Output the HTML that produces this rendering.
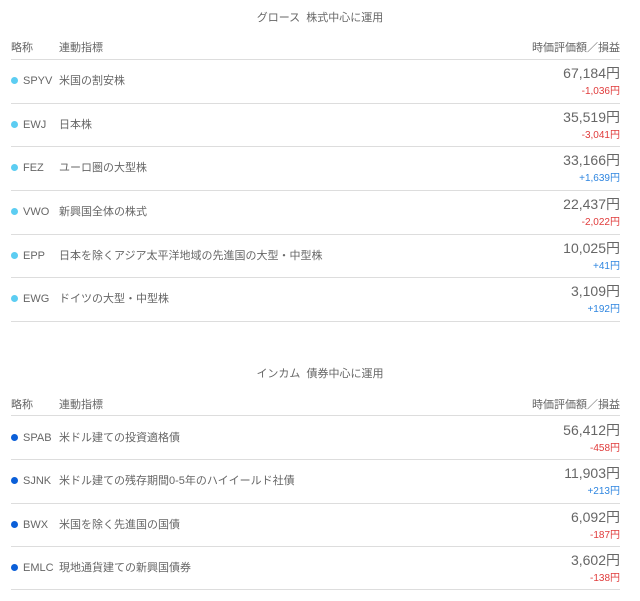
<!DOCTYPE html>
<html><head><meta charset="utf-8"><style>
body{margin:0;width:640px;height:601px;background:#fff;font-family:"Liberation Sans","Noto Sans CJK JP",sans-serif;color:#555;position:relative;overflow:hidden}
.a{position:absolute;white-space:nowrap;line-height:14px}
.t{font-size:11px;color:#666;left:0;width:640px;text-align:center}
.h{font-size:11px;color:#666}
.ln{position:absolute;left:11px;width:609px;height:1px;background:#ddd}
.dot{position:absolute;width:7px;height:7px;border-radius:50%}
.c{font-size:11px;color:#666}
.v{font-size:14px;line-height:16px;color:#666;right:20px;text-align:right}
.d{font-size:10px;right:20px;text-align:right}
.r{color:#e03b3b}.b{color:#2f86e0}
</style></head><body>
<div class="a t" style="top:11px">グロース&nbsp;&nbsp;株式中心に運用</div>
<div class="a h" style="left:11px;top:41px">略称</div>
<div class="a h" style="left:59px;top:41px">連動指標</div>
<div class="a h" style="right:20px;top:41px">時価評価額／損益</div>
<div class="ln" style="top:59px"></div>

<div class="dot" style="left:11px;top:77px;background:#5ccdf2"></div>
<div class="a c" style="left:23px;top:74px">SPYV</div><div class="a c" style="left:59px;top:74px">米国の割安株</div>
<div class="a v" style="top:65px">67,184円</div><div class="a d r" style="top:85px">-1,036円</div>
<div class="ln" style="top:103px"></div>

<div class="dot" style="left:11px;top:121px;background:#5ccdf2"></div>
<div class="a c" style="left:23px;top:118px">EWJ</div><div class="a c" style="left:59px;top:118px">日本株</div>
<div class="a v" style="top:109px">35,519円</div><div class="a d r" style="top:129px">-3,041円</div>
<div class="ln" style="top:146px"></div>

<div class="dot" style="left:11px;top:164px;background:#5ccdf2"></div>
<div class="a c" style="left:23px;top:161px">FEZ</div><div class="a c" style="left:59px;top:161px">ユーロ圏の大型株</div>
<div class="a v" style="top:152px">33,166円</div><div class="a d b" style="top:172px">+1,639円</div>
<div class="ln" style="top:190px"></div>

<div class="dot" style="left:11px;top:208px;background:#5ccdf2"></div>
<div class="a c" style="left:23px;top:205px">VWO</div><div class="a c" style="left:59px;top:205px">新興国全体の株式</div>
<div class="a v" style="top:196px">22,437円</div><div class="a d r" style="top:216px">-2,022円</div>
<div class="ln" style="top:234px"></div>

<div class="dot" style="left:11px;top:252px;background:#5ccdf2"></div>
<div class="a c" style="left:23px;top:249px">EPP</div><div class="a c" style="left:59px;top:249px">日本を除くアジア太平洋地域の先進国の大型・中型株</div>
<div class="a v" style="top:240px">10,025円</div><div class="a d b" style="top:260px">+41円</div>
<div class="ln" style="top:277px"></div>

<div class="dot" style="left:11px;top:295px;background:#5ccdf2"></div>
<div class="a c" style="left:23px;top:292px">EWG</div><div class="a c" style="left:59px;top:292px">ドイツの大型・中型株</div>
<div class="a v" style="top:283px">3,109円</div><div class="a d b" style="top:303px">+192円</div>
<div class="ln" style="top:321px"></div>

<div class="a t" style="top:367px">インカム&nbsp;&nbsp;債券中心に運用</div>
<div class="a h" style="left:11px;top:398px">略称</div>
<div class="a h" style="left:59px;top:398px">連動指標</div>
<div class="a h" style="right:20px;top:398px">時価評価額／損益</div>
<div class="ln" style="top:415px"></div>

<div class="dot" style="left:11px;top:434px;background:#0b5fd8"></div>
<div class="a c" style="left:23px;top:431px">SPAB</div><div class="a c" style="left:59px;top:431px">米ドル建ての投資適格債</div>
<div class="a v" style="top:422px">56,412円</div><div class="a d r" style="top:442px">-458円</div>
<div class="ln" style="top:459px"></div>

<div class="dot" style="left:11px;top:477px;background:#0b5fd8"></div>
<div class="a c" style="left:23px;top:474px">SJNK</div><div class="a c" style="left:59px;top:474px">米ドル建ての残存期間0-5年のハイイールド社債</div>
<div class="a v" style="top:465px">11,903円</div><div class="a d b" style="top:485px">+213円</div>
<div class="ln" style="top:503px"></div>

<div class="dot" style="left:11px;top:521px;background:#0b5fd8"></div>
<div class="a c" style="left:23px;top:518px">BWX</div><div class="a c" style="left:59px;top:518px">米国を除く先進国の国債</div>
<div class="a v" style="top:509px">6,092円</div><div class="a d r" style="top:529px">-187円</div>
<div class="ln" style="top:546px"></div>

<div class="dot" style="left:11px;top:564px;background:#0b5fd8"></div>
<div class="a c" style="left:23px;top:561px">EMLC</div><div class="a c" style="left:59px;top:561px">現地通貨建ての新興国債券</div>
<div class="a v" style="top:552px">3,602円</div><div class="a d r" style="top:572px">-138円</div>
<div class="ln" style="top:589px"></div>
</body></html>
